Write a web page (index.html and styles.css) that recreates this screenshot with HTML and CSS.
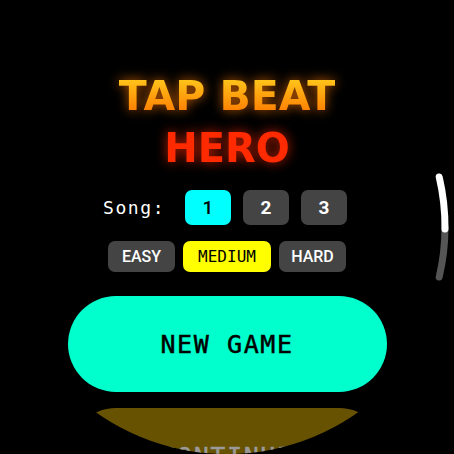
FILE: index.html
```html
<!DOCTYPE html>
<html>
<head>
<meta charset="utf-8">
<link rel="stylesheet" href="styles.css">
</head>
<body>
<div class="screen">
  <div class="title">
    <div class="t1">TAP BEAT</div>
    <div class="t2">HERO</div>
  </div>
  <div class="song-row">
    <span class="song-label">Song:</span>
    <div class="song-btns">
      <div class="sbtn active">1</div>
      <div class="sbtn">2</div>
      <div class="sbtn">3</div>
    </div>
  </div>
  <div class="diff-row">
    <div class="dbtn easy">EASY</div>
    <div class="dbtn medium">MEDIUM</div>
    <div class="dbtn hard">HARD</div>
  </div>
  <div class="big new">NEW GAME</div>
  <div class="big cont">CONTINUE</div>
  <svg class="scroll" width="454" height="454" viewBox="0 0 454 454">
    <path d="M 445 227 A 218 218 0 0 1 439.2 277" stroke="#555" stroke-width="7" fill="none" stroke-linecap="round"/>
    <path d="M 439.2 177 A 218 218 0 0 1 445 229" stroke="#fff" stroke-width="7" fill="none" stroke-linecap="round"/>
  </svg>
</div>
</body>
</html>
```
FILE: styles.css
```css
html, body {
  margin: 0;
  padding: 0;
  background: #000;
}
.screen {
  position: relative;
  width: 454px;
  height: 454px;
  border-radius: 50%;
  overflow: hidden;
  background: #000;
  display: flex;
  flex-direction: column;
  align-items: center;
  padding-top: 70px;
  box-sizing: border-box;
}
.title {
  font-family: "DejaVu Sans", sans-serif;
  font-weight: bold;
  font-size: 41px;
  line-height: 52px;
  text-align: center;
}
.t1 {
  background: linear-gradient(#ffc21a 20%, #ff7a00 85%);
  -webkit-background-clip: text;
  background-clip: text;
  color: transparent;
  filter: drop-shadow(0 0 6px rgba(255, 120, 0, 0.75));
}
.t2 {
  color: #ff2a00;
  font-size: 40px;
  filter: drop-shadow(0 0 6px rgba(255, 40, 0, 0.75));
}
.song-row {
  width: 244px;
  margin-right: 4px;
  display: flex;
  align-items: center;
  justify-content: space-between;
  margin-top: 16px;
}
.song-label {
  font-family: "DejaVu Sans Mono", monospace;
  font-size: 18px;
  letter-spacing: 1.6px;
  color: #fff;
}
.song-btns {
  display: flex;
  gap: 12px;
}
.sbtn {
  width: 46px;
  height: 35px;
  border-radius: 7px;
  background: #444;
  color: #fff;
  font-family: Roboto, sans-serif;
  font-weight: bold;
  font-size: 19px;
  display: flex;
  align-items: center;
  justify-content: center;
}
.sbtn.active {
  background: #00ffff;
  color: #000;
  font-weight: 500;
}
.diff-row {
  display: flex;
  gap: 8px;
  margin-top: 16px;
}
.dbtn {
  height: 31px;
  border-radius: 7px;
  background: #444;
  color: #fff;
  font-family: Roboto, sans-serif;
  font-weight: 500;
  font-size: 16px;
  display: flex;
  align-items: center;
  justify-content: center;
}
.easy, .hard {
  width: 67px;
}
.medium {
  width: 88px;
  background: #ffff00;
  color: #000;
  font-family: "DejaVu Sans Mono", monospace;
  font-weight: normal;
}
.big {
  flex: none;
  width: 319px;
  height: 96px;
  border-radius: 48px;
  display: flex;
  align-items: center;
  justify-content: center;
  font-family: "DejaVu Sans Mono", monospace;
  font-size: 25px;
  letter-spacing: 1.6px;
  -webkit-text-stroke: 0.5px currentColor;
}
.new {
  margin-top: 24px;
  background: #00ffcc;
  color: #000;
}
.cont {
  margin-top: 16px;
  background: #665200;
  color: #9a9a9a;
}
.scroll {
  position: absolute;
  left: 0;
  top: 0;
}
```
